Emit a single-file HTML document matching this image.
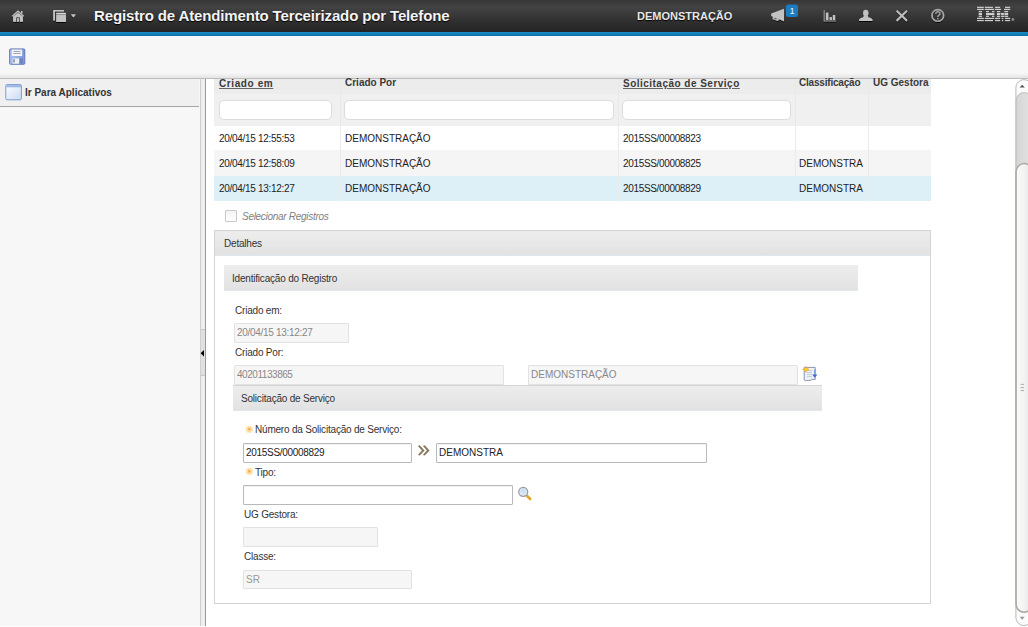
<!DOCTYPE html>
<html><head><meta charset="utf-8">
<style>
*{box-sizing:border-box;margin:0;padding:0}
html,body{width:1028px;height:627px;overflow:hidden;background:#fff;font-family:"Liberation Sans",sans-serif;color:#333}
.abs{position:absolute}
#hdr{position:absolute;left:0;top:0;width:1028px;height:32px;background:linear-gradient(#363636 0,#434343 7px,#2f2f2f 22px,#242424 32px)}
#blue{position:absolute;left:0;top:32px;width:1028px;height:4px;background:linear-gradient(#1a8ec8,#0a72a8)}
#tb{position:absolute;left:0;top:36px;width:1028px;height:43px;background:linear-gradient(#f7f7f7 0,#f7f7f7 37px,#e4e4e4 42px);border-bottom:1px solid #bdbdbd}
#title{position:absolute;left:94px;top:7px;font-weight:bold;font-size:15px;letter-spacing:-0.14px;color:#f4f4f4;text-shadow:0 1px 1px #000;white-space:nowrap}
#user{position:absolute;left:637px;top:10px;font-weight:bold;font-size:11px;color:#e8e8e8;text-shadow:0 1px 1px #000;white-space:nowrap}
#left{position:absolute;left:0;top:79px;width:200px;height:547px;background:#f7f7f7}
#goto{position:absolute;left:0;top:0;width:199px;height:28px;background:#f0f0f0;border-bottom:1px solid #a6a6a6}
#goto span{position:absolute;left:25px;top:8px;font-weight:bold;font-size:10px;color:#333;white-space:nowrap}
#spl1{position:absolute;left:200px;top:79px;width:1px;height:547px;background:#cfcfcf}
#spl2{position:absolute;left:201px;top:79px;width:4px;height:547px;background:#efefef}
#spl3{position:absolute;left:205px;top:79px;width:1px;height:547px;background:#999}
#handle{position:absolute;left:201px;top:329px;width:4px;height:47px;background:#e0e0e0;border-top:1px solid #c8c8c8;border-bottom:1px solid #c8c8c8}
.t10{font-size:10px;white-space:nowrap}
table{border-collapse:collapse}
#grid{position:absolute;left:214px;top:79px;width:717px}
.th{position:absolute;font-weight:bold;white-space:nowrap;color:#3a3a3a}
.row{position:absolute;left:214px;width:717px;height:25px}
.cell{position:absolute;top:0;height:100%;border-left:1px solid #ececec}
.ct{position:absolute;font-size:10px;color:#222;white-space:nowrap}
.fin{position:absolute;top:21px;height:20px;background:#fff;border:1px solid #e2e2e2;border-radius:4px}
#det{position:absolute;left:214px;top:230px;width:717px;height:374px;border:1px solid #d4d4d4;background:#fff}
.bar{position:absolute;background:linear-gradient(#ededed,#e2e2e2);border-bottom:1px solid #dfe7ee}
.lbl{position:absolute;font-size:10px;color:#333;white-space:nowrap;letter-spacing:-0.2px}
.ro{position:absolute;height:20px;background:#f6f6f6;border:1px solid #e2e2e2;border-radius:1px}
.rw{position:absolute;height:20px;background:#fff;border:1px solid #b9b9b9;border-radius:1px;box-shadow:inset 0 1px 1px rgba(0,0,0,0.06)}
.vt{position:absolute;left:2px;top:3px;font-size:10px;white-space:nowrap}
.star{position:absolute;color:#f5b041;font-size:9px}
</style></head><body>
<div id="hdr">
  <div id="title">Registro de Atendimento Terceirizado por Telefone</div>
  <div id="user">DEMONSTRAÇÃO</div>
</div>

<!-- header icons -->
<svg class="abs" style="left:0;top:0" width="1028" height="32" viewBox="0 0 1028 32">
 <defs>
  <filter id="sh" x="-20%" y="-20%" width="140%" height="160%"><feDropShadow dx="0" dy="1" stdDeviation="0.4" flood-color="#000" flood-opacity="0.9"/></filter>
 </defs>
 <g filter="url(#sh)" fill="#c2c2c2">
  <!-- home -->
  <path d="M11.6 15.9 L18 10.3 L24.4 15.9 L23.4 16.5 L18 11.9 L12.6 16.5 Z"/>
  <path d="M21 11 H22.5 V13.6 L21 12.4 Z"/>
  <path d="M13.1 16.4 L18 12.7 L22.9 16.4 V21.8 H19.8 V17.2 H16.2 V21.8 H13.1 Z"/>
  <rect x="17.1" y="18.2" width="1.8" height="3.6" fill="#c8c8c8"/>
  <!-- windows -->
  <path d="M53.2 10 H64 V11.6 H55 V20.6 H53.2 Z"/>
  <rect x="56.2" y="12.9" width="9.8" height="1.5" fill="#dcdcdc"/>
  <rect x="56.2" y="15" width="9.8" height="7" />
  <path d="M70.8 14.2 H76 L73.4 17.4 Z"/>
  <!-- megaphone -->
  <path d="M771.2 13.4 L784 8.8 V21.2 L771.2 15.9 Z"/>
  <path d="M773.2 16.6 L778.9 18.9 L777.8 21.1 L772.4 18.9 Z"/>
  <path d="M774.6 17.9 L776.8 18.8 L776.4 19.6 L774.2 18.7 Z" fill="#3a3a3a"/>
  <!-- chart -->
  <path d="M823.6 10 H824.8 V20.4 H836 V21.6 H823.6 Z" fill="#8c8c8c"/>
  <rect x="825.9" y="12.6" width="2.5" height="7.4"/>
  <rect x="829.6" y="17" width="2.3" height="3"/>
  <rect x="832.8" y="15" width="2.4" height="5"/>
  <!-- user -->
  <ellipse cx="865.8" cy="13.1" rx="2.7" ry="3.3"/>
  <path d="M864 15.5 H867.6 L868.4 17.2 Q872.6 18.2 872.6 20 V21.1 H859 V20 Q859 18.2 863.2 17.2 Z"/>
 </g>
 <g filter="url(#sh)" fill="none">
  <path d="M896.6 10.6 L907 20.8 M907 10.6 L896.6 20.8" stroke="#c0c0c0" stroke-width="1.9"/>
  <circle cx="937.8" cy="15.4" r="5.8" stroke="#a8a8a8" stroke-width="1.6"/>
 </g>
 <path d="M935.7 13.8 Q935.8 11.6 937.9 11.6 Q940 11.7 940 13.5 Q940 14.7 938.7 15.4 Q937.8 15.9 937.8 17" stroke="#a8a8a8" stroke-width="1.4" fill="none"/><rect x="937.1" y="18" width="1.4" height="1.4" fill="#a8a8a8"/>
 <rect x="786" y="4.5" width="12" height="12.6" rx="2.5" fill="#1b7cc2"/>
 <text x="792" y="13.6" font-family="Liberation Sans" font-size="8.5" fill="#fff" text-anchor="middle">1</text>
 <!-- IBM -->
<g fill="#cfcfcf">
<rect x="977.06" y="6.75" width="6.74" height="1.2"/>
<rect x="984.83" y="6.75" width="8.17" height="1.2"/>
<rect x="995.04" y="6.75" width="5.11" height="1.2"/>
<rect x="1005.05" y="6.75" width="5.11" height="1.2"/>
<rect x="977.06" y="8.79" width="6.74" height="1.2"/>
<rect x="984.83" y="8.79" width="9.40" height="1.2"/>
<rect x="995.04" y="8.79" width="5.92" height="1.2"/>
<rect x="1004.02" y="8.79" width="6.13" height="1.2"/>
<rect x="978.70" y="10.96" width="3.27" height="1.2"/>
<rect x="986.05" y="10.96" width="2.86" height="1.2"/>
<rect x="991.97" y="10.96" width="2.45" height="1.2"/>
<rect x="996.88" y="10.96" width="3.27" height="1.2"/>
<rect x="1004.23" y="10.96" width="3.88" height="1.2"/>
<rect x="978.70" y="12.88" width="3.27" height="1.2"/>
<rect x="986.05" y="12.88" width="8.37" height="1.2"/>
<rect x="996.88" y="12.88" width="3.68" height="1.2"/>
<rect x="1001.17" y="12.88" width="2.66" height="1.2"/>
<rect x="1004.43" y="12.88" width="3.68" height="1.2"/>
<rect x="978.70" y="13.94" width="3.27" height="1.2"/>
<rect x="986.05" y="13.94" width="8.37" height="1.2"/>
<rect x="996.88" y="13.94" width="3.27" height="1.2"/>
<rect x="1001.17" y="13.94" width="2.66" height="1.2"/>
<rect x="1004.43" y="13.94" width="3.68" height="1.2"/>
<rect x="978.70" y="15.74" width="3.27" height="1.2"/>
<rect x="986.05" y="15.74" width="2.86" height="1.2"/>
<rect x="991.97" y="15.74" width="2.45" height="1.2"/>
<rect x="996.88" y="15.74" width="3.27" height="1.2"/>
<rect x="1000.96" y="15.74" width="3.06" height="1.2"/>
<rect x="1004.43" y="15.74" width="3.68" height="1.2"/>
<rect x="977.06" y="17.78" width="6.74" height="1.2"/>
<rect x="984.83" y="17.78" width="9.40" height="1.2"/>
<rect x="995.04" y="17.78" width="5.11" height="1.2"/>
<rect x="1001.78" y="17.78" width="1.63" height="1.2"/>
<rect x="1005.05" y="17.78" width="5.11" height="1.2"/>
<rect x="977.06" y="19.94" width="6.74" height="1.2"/>
<rect x="984.83" y="19.94" width="8.17" height="1.2"/>
<rect x="995.04" y="19.94" width="5.11" height="1.2"/>
<rect x="1001.98" y="19.94" width="1.23" height="1.2"/>
<rect x="1005.05" y="19.94" width="5.11" height="1.2"/>
</g>
<circle cx="1012.9" cy="19.5" r="1.4" fill="#888"/>
</svg>
<div id="blue"></div>
<div id="tb"></div>

<svg class="abs" style="left:0;top:36px" width="40" height="40" viewBox="0 36 40 40">
 <defs><linearGradient id="flp" x1="0" x2="1"><stop offset="0" stop-color="#a9c0ee"/><stop offset="1" stop-color="#7d97d6"/></linearGradient></defs>
 <rect x="9.6" y="48.9" width="15.2" height="15.4" rx="1" fill="url(#flp)" stroke="#5c72b4" stroke-width="0.9"/>
 <rect x="11.8" y="49.6" width="10.3" height="6.4" fill="#f4f6fb"/>
 <rect x="13.4" y="51.1" width="7.2" height="0.8" fill="#8a8f9a"/>
 <rect x="13.4" y="53.1" width="7.2" height="0.8" fill="#8a8f9a"/>
 <rect x="12.7" y="58.4" width="6.3" height="5.3" fill="#eef0f4"/>
 <rect x="13.6" y="59.2" width="0.9" height="3.2" fill="#444"/>
 <rect x="19.8" y="58.4" width="3.2" height="5.3" fill="#6d84c4"/>
</svg>
<div id="left"><div id="goto"><svg class="abs" style="left:0;top:0" width="24" height="28" viewBox="0 79 24 28">
 <defs><linearGradient id="wg" x1="0" y1="0" x2="1" y2="1"><stop offset="0" stop-color="#ffffff"/><stop offset="1" stop-color="#c9daf2"/></linearGradient></defs>
 <rect x="5.8" y="84.6" width="15.6" height="15.2" rx="1.2" fill="url(#wg)" stroke="#7b9bd3" stroke-width="1"/>
 <rect x="6.3" y="85.1" width="14.6" height="2.2" fill="#9db6e4"/>
</svg><span>Ir Para Aplicativos</span></div></div>
<div id="spl1"></div><div id="spl2"></div><div id="spl3"></div>
<div id="handle"></div>

<!-- grid header -->
<div class="abs" style="left:214px;top:79px;width:717px;height:15px;background:#ececec"></div>
<div class="abs" style="left:214px;top:94px;width:717px;height:32px;background:#f0f0f0"></div>
<div class="th" style="left:219px;top:78px;font-size:10px;letter-spacing:0.6px;text-decoration:underline;text-decoration-color:#666;color:#3a3a3a">Criado em</div>
<div class="th" style="left:345px;top:77px;font-size:10px">Criado Por</div>
<div class="th" style="left:623px;top:78px;font-size:10px;letter-spacing:0.48px;text-decoration:underline;text-decoration-color:#666;color:#3a3a3a">Solicitação de Serviço</div>
<div class="th" style="left:799px;top:77px;font-size:10px;letter-spacing:-0.2px">Classificação</div>
<div class="th" style="left:873px;top:77px;font-size:10px">UG Gestora</div>
<div class="abs" style="left:219px;top:100px;width:113px;height:20px;background:#fff;border:1px solid #dcdcdc;border-radius:5px"></div>
<div class="abs" style="left:344px;top:100px;width:270px;height:20px;background:#fff;border:1px solid #dcdcdc;border-radius:5px"></div>
<div class="abs" style="left:622px;top:100px;width:169px;height:20px;background:#fff;border:1px solid #dcdcdc;border-radius:5px"></div>

<!-- rows -->
<div class="row" style="top:126px;height:24px;background:#fff"></div>
<div class="row" style="top:150px;height:26px;background:#f5f5f5"></div>
<div class="row" style="top:176px;background:#ddf0f8"></div>
<div class="abs" style="left:340px;top:79px;width:1px;height:47px;background:#e9e9e9"></div><div class="abs" style="left:340px;top:126px;width:1px;height:75px;background:#ebebeb"></div>
<div class="abs" style="left:618px;top:79px;width:1px;height:47px;background:#e9e9e9"></div><div class="abs" style="left:618px;top:126px;width:1px;height:75px;background:#ebebeb"></div>
<div class="abs" style="left:795px;top:79px;width:1px;height:47px;background:#e9e9e9"></div><div class="abs" style="left:795px;top:126px;width:1px;height:75px;background:#ebebeb"></div>
<div class="abs" style="left:868px;top:79px;width:1px;height:47px;background:#e9e9e9"></div><div class="abs" style="left:868px;top:126px;width:1px;height:75px;background:#ebebeb"></div>

<div class="ct" style="left:219px;top:133px;letter-spacing:-0.3px">20/04/15 12:55:53</div>
<div class="ct" style="left:345px;top:133px">DEMONSTRAÇÃO</div>
<div class="ct" style="left:623px;top:133px;letter-spacing:-0.34px">2015SS/00008823</div>
<div class="ct" style="left:219px;top:158px;letter-spacing:-0.3px">20/04/15 12:58:09</div>
<div class="ct" style="left:345px;top:158px">DEMONSTRAÇÃO</div>
<div class="ct" style="left:623px;top:158px;letter-spacing:-0.34px">2015SS/00008825</div>
<div class="ct" style="left:799px;top:158px">DEMONSTRA</div>
<div class="ct" style="left:219px;top:183px;letter-spacing:-0.3px">20/04/15 13:12:27</div>
<div class="ct" style="left:345px;top:183px">DEMONSTRAÇÃO</div>
<div class="ct" style="left:623px;top:183px;letter-spacing:-0.34px">2015SS/00008829</div>
<div class="ct" style="left:799px;top:183px">DEMONSTRA</div>

<div class="abs" style="left:225px;top:210px;width:12px;height:12px;border-radius:1px;border:1px solid #c8c8c8;background:linear-gradient(#f4f4f4,#fff)"></div>
<div class="abs" style="left:242px;top:211px;font-size:10px;font-style:italic;color:#808080;white-space:nowrap;letter-spacing:-0.29px">Selecionar Registros</div>

<!-- details -->
<div id="det"></div>
<div class="bar" style="left:215px;top:231px;width:715px;height:25px"></div>
<div class="lbl" style="left:224px;top:238px">Detalhes</div>
<div class="bar" style="left:224px;top:265px;width:634px;height:26px"></div>
<div class="lbl" style="left:232px;top:273px">Identificação do Registro</div>

<div class="lbl" style="left:235px;top:305px">Criado em:</div>
<div class="ro" style="left:234px;top:323px;width:115px"><span class="vt" style="color:#888;letter-spacing:-0.3px">20/04/15 13:12:27</span></div>
<div class="lbl" style="left:235px;top:347px">Criado Por:</div>
<div class="ro" style="left:234px;top:365px;width:270px"><span class="vt" style="color:#888;letter-spacing:-0.45px">40201133865</span></div>
<div class="ro" style="left:528px;top:365px;width:270px"><span class="vt" style="color:#888">DEMONSTRAÇÃO</span></div>

<div class="bar" style="left:233px;top:385px;width:589px;height:26px;border-top:1px solid #d4d4d4"></div>
<div class="lbl" style="left:241px;top:393px">Solicitação de Serviço</div>

<div class="lbl" style="left:255px;top:424px">Número da Solicitação de Serviço:</div>
<div class="rw" style="left:243px;top:443px;width:169px"><span class="vt" style="color:#222;letter-spacing:-0.3px">2015SS/00008829</span></div>
<div class="rw" style="left:436px;top:443px;width:271px"><span class="vt" style="color:#222">DEMONSTRA</span></div>
<div class="lbl" style="left:255px;top:467px">Tipo:</div>
<div class="rw" style="left:243px;top:485px;width:270px"></div>
<div class="lbl" style="left:244px;top:509px">UG Gestora:</div>
<div class="ro" style="left:243px;top:527px;width:135px"></div>
<div class="lbl" style="left:244px;top:551px">Classe:</div>
<div class="ro" style="left:243px;top:570px;width:169px;height:19px"><span class="vt" style="color:#999">SR</span></div>


<!-- splitter arrow -->
<svg class="abs" style="left:199px;top:348px" width="8" height="10" viewBox="199 348 8 10"><path d="M200.6 353.2 L204 350 V356.4 Z" fill="#000"/></svg>

<!-- required stars -->
<svg class="abs" style="left:244px;top:424px" width="12" height="52" viewBox="244 424 12 52"><circle cx="249.3" cy="429.3" r="3.4" fill="#fde3b8" opacity="0.6"/><path d="M250.41 429.76 L252.72 430.72 M249.76 430.41 L250.72 432.72 M248.84 430.41 L247.88 432.72 M248.19 429.76 L245.88 430.72 M248.19 428.84 L245.88 427.88 M248.84 428.19 L247.88 425.88 M249.76 428.19 L250.72 425.88 M250.41 428.84 L252.72 427.88 " stroke="#fcd08e" stroke-width="1" /><circle cx="249.3" cy="429.3" r="1.3" fill="#f9b035"/><circle cx="249.3" cy="471.4" r="3.4" fill="#fde3b8" opacity="0.6"/><path d="M250.41 471.86 L252.72 472.82 M249.76 472.51 L250.72 474.82 M248.84 472.51 L247.88 474.82 M248.19 471.86 L245.88 472.82 M248.19 470.94 L245.88 469.98 M248.84 470.29 L247.88 467.98 M249.76 470.29 L250.72 467.98 M250.41 470.94 L252.72 469.98 " stroke="#fcd08e" stroke-width="1" /><circle cx="249.3" cy="471.4" r="1.3" fill="#f9b035"/></svg>
<!-- >> -->
<svg class="abs" style="left:415px;top:443px" width="18" height="16" viewBox="415 443 18 16">
 <path d="M418.1 446.3 Q418.6 445 420 445.4 L424.6 450.4 L420 455.3 Q418.6 455.7 418.1 454.5 L421.9 450.4 Z M423.1 446.3 Q423.6 445 425 445.4 L429.6 450.4 L425 455.3 Q423.6 455.7 423.1 454.5 L426.9 450.4 Z" fill="#8b7b5e"/>
</svg>
<!-- magnifier -->
<svg class="abs" style="left:514px;top:484px" width="22" height="20" viewBox="514 484 22 20">
 <defs><radialGradient id="lens" cx="0.5" cy="0.4" r="0.6"><stop offset="0" stop-color="#c4daf2"/><stop offset="0.7" stop-color="#dce9f6"/><stop offset="1" stop-color="#ffffff"/></radialGradient></defs>
 <path d="M527.2 496 L530.2 499" stroke="#e0a82c" stroke-width="2.6" stroke-linecap="round"/>
 <circle cx="523.2" cy="491.8" r="4.5" fill="url(#lens)" stroke="#9c9c9c" stroke-width="1.3"/>
</svg>
<!-- doc icon -->
<svg class="abs" style="left:800px;top:364px" width="20" height="20" viewBox="800 363 20 20">
 <path d="M804.2 366.4 H815.2 V378.6 Q813 377.6 811 379 Q809 380.2 806.6 379.4 Q805 380.6 804.2 379 Z" fill="#eef2f8" stroke="#7e8aa8" stroke-width="0.9"/>
 <path d="M806.8 369.6 H812 M806.8 371.6 H812 M806.8 373.6 H812 M806.8 375.6 H812" stroke="#b8c2d6" stroke-width="0.8"/>
 <path d="M814.8 368.2 V374" stroke="#7aa0dc" stroke-width="1.4"/>
 <path d="M812.2 373.6 H817.4 L814.8 376.8 Z" fill="#3b6cc8"/>
 <path d="M805.8 365.4 L806.9 367.4 L809 368.4 L806.9 369.4 L805.8 371.4 L804.7 369.4 L802.6 368.4 L804.7 367.4 Z" fill="#f7d21c" stroke="#f0a020" stroke-width="0.6"/>
</svg>

<!-- scrollbar -->
<svg class="abs" style="left:1010px;top:79px" width="18" height="548" viewBox="1010 79 18 548">
 <defs>
  <linearGradient id="thumb" x1="0" x2="1"><stop offset="0" stop-color="#fbfbfb"/><stop offset="0.6" stop-color="#f1f1f1"/><stop offset="1" stop-color="#dedede"/></linearGradient>
  <linearGradient id="trk" x1="0" x2="1"><stop offset="0" stop-color="#d6d6d6"/><stop offset="1" stop-color="#e2e2e2"/></linearGradient>
 </defs>
 <rect x="1015.9" y="79.6" width="16" height="546" rx="8" fill="#fbfbfb" stroke="#bcb8b4" stroke-width="1"/>
 <rect x="1016.2" y="92.6" width="15.4" height="516" rx="7.7" fill="url(#trk)" stroke="#c2beba" stroke-width="1"/>
 <path d="M1019.6 87.6 L1022.2 84.8 L1024.8 87.6 Z" fill="#555"/>
 <rect x="1016.1" y="163.6" width="16" height="448.6" rx="8" fill="url(#thumb)" stroke="#aca8a4" stroke-width="1.5"/>
 <path d="M1020.6 384.4 H1024 M1020.6 387.6 H1024 M1020.6 390.6 H1024" stroke="#9a9a9a" stroke-width="0.8"/>
 <path d="M1019.8 616.8 L1022.2 619.8 L1024.6 616.8 Z" fill="#999"/>
</svg>
</body></html>
